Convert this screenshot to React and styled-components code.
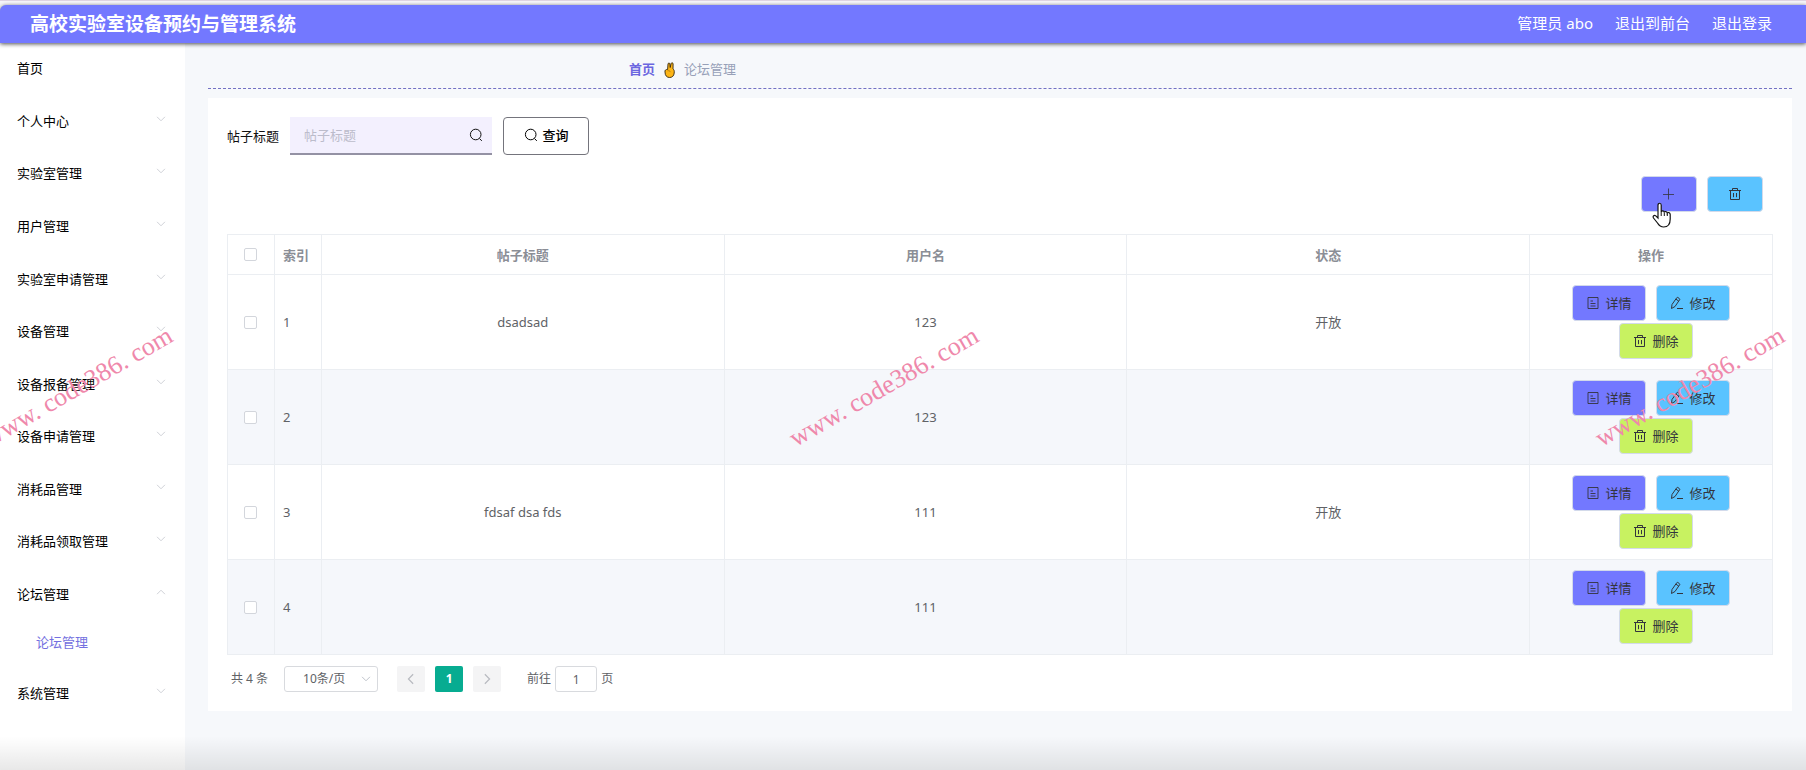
import React, { useState } from 'react';
import styled, { createGlobalStyle, css } from 'styled-components';

const GlobalStyle = createGlobalStyle`
  * {
    box-sizing: border-box;
  }

  body {
    margin: 0;
    background: #f6f8fb;
    color: #111;
    font-family: 'Noto Sans', 'Noto Sans CJK SC', sans-serif;
    font-size: 13px;
    line-height: 20px;
  }

  button,
  input,
  select {
    font-family: inherit;
    font-size: inherit;
    line-height: inherit;
  }
`;

const Page = styled.div`
  position: relative;
  min-height: 100vh;
  display: flex;
  flex-direction: column;
  overflow: hidden;
`;

const TopStrip = styled.div`
  height: 5px;
  background: #f7f5fa;
  border-top: 1px solid #dfd3e2;
`;

const Header = styled.header`
  position: relative;
  height: 38px;
  padding: 0 34px 0 30px;
  display: flex;
  align-items: center;
  justify-content: space-between;
  background: #7378ff;
  border-radius: 6px 0 0 0;
  box-shadow: 0 1px 4px rgba(0, 0, 0, 0.7);
  color: #fff;
`;

const Title = styled.h1`
  margin: 0;
  font-size: 19px;
  line-height: 24px;
`;

const UserNav = styled.nav`
  display: flex;
  gap: 22px;
  padding-bottom: 2px;
  font-size: 15px;
`;

const UserLink = styled.a`
  color: #fff;
  text-decoration: none;
`;

const Body = styled.div`
  flex: 1;
  display: flex;
`;

const Sidebar = styled.nav`
  width: 185px;
  flex: none;
  display: flex;
  flex-direction: column;
  padding-bottom: 50px;
  background: #fff;
`;

const MenuItem = styled.button`
  flex: 1 0 40px;
  display: flex;
  align-items: center;
  justify-content: space-between;
  padding: 0 19px 2px 17px;
  border: 0;
  background: none;
  color: #000;
  cursor: pointer;
`;

const ChevronSlot = styled.span`
  display: flex;
  padding-bottom: 4px;
  color: #d0d2d8;
`;

const SubItem = styled.a`
  flex: none;
  height: 46px;
  padding: 11px 0 0 36px;
  color: #7470e0;
  text-decoration: none;
`;

const Main = styled.main`
  flex: 1;
  min-width: 0;
  padding: 0 14px 48px 23px;
`;

const Breadcrumb = styled.nav`
  height: 46px;
  padding: 16px 0 0 421px;
  display: flex;
  align-items: flex-start;
  gap: 9px;
  border-bottom: 1px dashed #7371c4;

  svg {
    margin-top: 3px;
  }
`;

const CrumbHome = styled.a`
  color: #6b66e0;
  font-weight: bold;
  text-decoration: none;
`;

const CrumbCurrent = styled.span`
  color: #97a0b8;
`;

const Card = styled.section`
  margin-top: 9px;
  padding: 19px;
  background: #fff;
`;

const SearchForm = styled.form`
  display: flex;
  align-items: center;
  gap: 11px;
  height: 38px;
`;

const SearchField = styled.span`
  width: 202px;
  height: 38px;
  padding: 0 9px 0 14px;
  display: flex;
  align-items: center;
  background: #f3f0fe;
  border-bottom: 2px solid #9492a4;
`;

const SearchInput = styled.input`
  flex: 1;
  min-width: 0;
  padding: 0;
  border: 0;
  outline: 0;
  background: none;

  &::placeholder {
    color: #bcbccb;
  }
`;

const QueryButton = styled.button`
  width: 86px;
  height: 38px;
  padding: 0 0 2px;
  display: flex;
  align-items: center;
  justify-content: center;
  gap: 5px;
  border: 1px solid #74747c;
  border-radius: 4px;
  background: #fff;
  color: #000;
  font-weight: 500;
`;

const Toolbar = styled.div`
  display: flex;
  justify-content: flex-end;
  gap: 10px;
  padding: 21px 10px 22px 0;
`;

const tones = {
  detail: '#7378ff',
  edit: '#5ac3ff',
  remove: '#c8f261',
};

const ColorButton = styled.button`
  height: 36px;
  padding: 0 0 1px;
  display: flex;
  align-items: center;
  justify-content: center;
  gap: 5px;
  border: 1px solid #d3daea;
  border-radius: 4px;
  background: ${({ $tone }) => tones[$tone]};
  color: #33343c;
  cursor: pointer;
`;

const ToolButton = styled(ColorButton)`
  width: 56px;
`;

const AddButton = styled(ToolButton)`
  position: relative;
`;

const RowButton = styled(ColorButton)`
  width: 74px;

  & + & {
    margin-left: 10px;
  }
`;

const Pointer = styled.svg`
  position: absolute;
  left: 10px;
  top: 25px;
`;

const Table = styled.table`
  width: 100%;
  table-layout: fixed;
  border-collapse: separate;
  border-spacing: 0;
  border-top: 1px solid #ebeef2;
  border-left: 1px solid #ebeef2;
  color: #606266;
`;

const cell = css`
  padding: 0 8px;
  border-right: 1px solid #ebeef2;
  border-bottom: 1px solid #ebeef2;
  text-align: ${({ $left }) => ($left ? 'left' : 'center')};
`;

const HeadCell = styled.th`
  ${cell}
  height: 40px;
  width: ${({ $width }) => ($width ? `${$width}px` : 'auto')};
  color: #8b8e96;
  font-weight: bold;
`;

const Row = styled.tr`
  height: 95px;
  background: ${({ $striped }) => ($striped ? '#f5f7fb' : '#fff')};
`;

const Cell = styled.td`
  ${cell}
`;

const Checkbox = styled.input`
  appearance: none;
  display: block;
  width: 13px;
  height: 13px;
  margin: 0 0 0 8px;
  border: 1px solid #d3d6dc;
  border-radius: 2px;
  background: #fff;
`;

const Actions = styled.div`
  display: flex;
  flex-wrap: wrap;
  justify-content: center;
  row-gap: 2px;
`;

const Pagination = styled.div`
  display: flex;
  align-items: center;
  padding: 11px 0 0 4px;
  color: #606266;
  font-size: 12px;
`;

const SizeSelect = styled.span`
  position: relative;
  width: 94px;
  height: 26px;
  margin: 0 19px 0 16px;
  display: flex;
  align-items: center;
  color: #c0c4cc;

  svg {
    position: absolute;
    right: 7px;
    pointer-events: none;
  }
`;

const Select = styled.select`
  appearance: none;
  width: 100%;
  height: 26px;
  padding: 0 0 0 18px;
  border: 1px solid #d8dade;
  border-radius: 3px;
  background: #fff;
  color: #606266;
`;

const Pager = styled.div`
  display: flex;
  gap: 10px;
  margin-right: 26px;
`;

const PageButton = styled.button`
  width: 28px;
  height: 26px;
  padding: 0;
  display: flex;
  align-items: center;
  justify-content: center;
  border: 0;
  border-radius: 2px;
  background: ${({ $active }) => ($active ? '#07ac91' : '#f4f4f5')};
  color: ${({ $active }) => ($active ? '#fff' : '#b8bac0')};
  font-weight: bold;
`;

const Jumper = styled.label`
  display: flex;
  align-items: center;
  gap: 4px;
`;

const PageInput = styled.input`
  width: 42px;
  height: 26px;
  padding: 0;
  border: 1px solid #d8dade;
  border-radius: 3px;
  color: #606266;
  text-align: center;
`;

const BottomFade = styled.div`
  position: absolute;
  left: 0;
  right: 0;
  bottom: 0;
  height: 34px;
  background: linear-gradient(rgba(0, 0, 0, 0), rgba(0, 0, 0, 0.09));
  pointer-events: none;
`;

const Watermarks = styled.div`
  position: absolute;
  top: 367px;
  left: -42px;
  right: -4px;
  display: flex;
  justify-content: space-between;
  pointer-events: none;
`;

const Watermark = styled.span`
  width: 240px;
  transform: rotate(-30deg);
  color: #ef88ab;
  font-family: 'Liberation Serif', serif;
  font-size: 26px;
  line-height: 40px;
  text-align: center;
  white-space: nowrap;
`;

const Icon = ({ size = 14, children, ...rest }) => (
  <svg
    width={size}
    height={size}
    viewBox="0 0 14 14"
    fill="none"
    stroke="currentColor"
    strokeWidth="1"
    aria-hidden="true"
    {...rest}
  >
    {children}
  </svg>
);

const SearchIcon = ({ size }) => (
  <Icon size={size}>
    <circle cx="6.7" cy="6.5" r="5.3" />
    <path d="M10.5 10.5l2.3 2.4" />
  </Icon>
);

const PlusIcon = () => (
  <Icon strokeWidth="0.8">
    <path d="M6.5 1.5v11M1 7.500h11" />
  </Icon>
);

const TrashIcon = () => (
  <Icon>
    <path d="M1 3.5h12M4.5 3.3V1.5h5v1.8M2.5 3.5v9h9v-9M5.5 6v4.2M8.5 6v4.2" />
  </Icon>
);

const DocIcon = () => (
  <Icon strokeWidth="0.9">
    <path d="M2 1.500h10v11H2zM4.500 5h2.500M4.500 7.500h5M4.500 10h5" />
  </Icon>
);

const EditIcon = () => (
  <Icon>
    <path d="M2 8.500L6.700 1.800q.6-.7 1.300-.2l1.400 1q.7.500.2 1.200L5 10.500l-3.500 2zM6 3.200l2.700 1.900M7 12.500h6" />
  </Icon>
);

const Chevron = ({ dir = 'down', size = 10 }) => {
  const paths = {
    down: 'M1.500 4l5.500 5.500L12.500 4',
    up: 'M1.500 10L7 4.500l5.500 5.500',
    left: 'M9.500 1.500L4 7l5.500 5.500',
    right: 'M4.500 1.500L10 7l-5.500 5.500',
  };
  return (
    <Icon size={size}>
      <path d={paths[dir]} strokeWidth="1.400" />
    </Icon>
  );
};

const HandIcon = () => (
  <svg width="11" height="16" viewBox="0 0 11 16" aria-hidden="true">
    <path
      d="M1 10C.6 8.300 1.800 7.200 3.600 7.500L4 2C4.200.6 5.800.7 5.900 2L6.200 5.500l.9-4C7.400.4 9.200.6 9.100 2L9 7c1.300.9 1.400 2.200 1.200 4-.3 2.800-1.900 4.500-4.600 4.500S1 13.700 1 10z"
      fill="#fdb515"
      stroke="#33260f"
      strokeWidth="0.900"
    />
    <path d="M3.500 8.800c1.200-.4 2.700.2 3 1.300" fill="none" stroke="#a06a10" strokeWidth=".7" />
  </svg>
);

const menu = [
  '个人中心',
  '实验室管理',
  '用户管理',
  '实验室申请管理',
  '设备管理',
  '设备报备管理',
  '设备申请管理',
  '消耗品管理',
  '消耗品领取管理',
  '论坛管理',
  '系统管理',
];

const posts = [
  { id: 1, title: 'dsadsad', user: '123', status: '开放' },
  { id: 2, title: '', user: '123', status: '' },
  { id: 3, title: 'fdsaf dsa fds', user: '111', status: '开放' },
  { id: 4, title: '', user: '111', status: '' },
];

const App = () => {
  const [open, setOpen] = useState('论坛管理');
  const [keyword, setKeyword] = useState('');
  const [checked, setChecked] = useState([]);
  const [page, setPage] = useState('1');

  const toggleRow = (id) => {
    setChecked((prev) => (prev.includes(id) ? prev.filter((i) => i !== id) : [...prev, id]));
  };

  const toggleAll = (e) => {
    setChecked(e.target.checked ? posts.map((post) => post.id) : []);
  };

  return (
    <Page>
      <GlobalStyle />
      <TopStrip />
      <Header>
        <Title>高校实验室设备预约与管理系统</Title>
        <UserNav>
          <span>管理员 abo</span>
          <UserLink href="#front">退出到前台</UserLink>
          <UserLink href="#logout">退出登录</UserLink>
        </UserNav>
      </Header>
      <Body>
        <Sidebar>
          <MenuItem type="button">首页</MenuItem>
          {menu.map((name) => (
            <React.Fragment key={name}>
              <MenuItem type="button" onClick={() => setOpen(open === name ? '' : name)}>
                {name}
                <ChevronSlot>
                  <Chevron dir={open === name ? 'up' : 'down'} />
                </ChevronSlot>
              </MenuItem>
              {name === '论坛管理' && open === name && <SubItem href="#forum">论坛管理</SubItem>}
            </React.Fragment>
          ))}
        </Sidebar>
        <Main>
          <Breadcrumb>
            <CrumbHome href="#home">首页</CrumbHome>
            <HandIcon />
            <CrumbCurrent>论坛管理</CrumbCurrent>
          </Breadcrumb>
          <Card>
            <SearchForm onSubmit={(e) => e.preventDefault()}>
              <label htmlFor="keyword">帖子标题</label>
              <SearchField>
                <SearchInput
                  id="keyword"
                  placeholder="帖子标题"
                  value={keyword}
                  onChange={(e) => setKeyword(e.target.value)}
                />
                <SearchIcon />
              </SearchField>
              <QueryButton type="submit">
                <SearchIcon />
                查询
              </QueryButton>
            </SearchForm>
            <Toolbar>
              <AddButton type="button" $tone="detail" aria-label="新增">
                <PlusIcon />
                <Pointer width="20" height="26" viewBox="0 0 20 26" aria-hidden="true">
                  <path
                    d="M6 16V3.200C6 .6 9.200.6 9.200 3.200V10c.3-1.500 2.900-1.500 3.100.4.400-1.300 2.800-1.200 3 .7.500-1 2.900-.8 2.900 1.400V17c0 4.500-2.200 8-6.500 8-3.200 0-4.700-1.500-6.200-4L1.500 16c-1.100-2 .8-3.300 2.300-2.100z"
                    fill="#fff"
                    stroke="#111"
                    strokeWidth="1.200"
                  />
                  <path d="M9.200 10v4M12.300 10.500V14M15.300 11.500V14" stroke="#111" />
                </Pointer>
              </AddButton>
              <ToolButton type="button" $tone="edit" aria-label="删除所选">
                <TrashIcon />
              </ToolButton>
            </Toolbar>
            <Table>
              <thead>
                <tr>
                  <HeadCell $width={47}>
                    <Checkbox
                      type="checkbox"
                      aria-label="全选"
                      checked={checked.length === posts.length}
                      onChange={toggleAll}
                    />
                  </HeadCell>
                  <HeadCell $width={47} $left>索引</HeadCell>
                  <HeadCell>帖子标题</HeadCell>
                  <HeadCell>用户名</HeadCell>
                  <HeadCell>状态</HeadCell>
                  <HeadCell $width={243}>操作</HeadCell>
                </tr>
              </thead>
              <tbody>
                {posts.map((post, index) => (
                  <Row key={post.id} $striped={index % 2 === 1}>
                    <Cell>
                      <Checkbox
                        type="checkbox"
                        aria-label={`选择 ${post.id}`}
                        checked={checked.includes(post.id)}
                        onChange={() => toggleRow(post.id)}
                      />
                    </Cell>
                    <Cell $left>{post.id}</Cell>
                    <Cell>{post.title}</Cell>
                    <Cell>{post.user}</Cell>
                    <Cell>{post.status}</Cell>
                    <Cell>
                      <Actions>
                        <RowButton type="button" $tone="detail">
                          <DocIcon />
                          详情
                        </RowButton>
                        <RowButton type="button" $tone="edit">
                          <EditIcon />
                          修改
                        </RowButton>
                        <RowButton type="button" $tone="remove">
                          <TrashIcon />
                          删除
                        </RowButton>
                      </Actions>
                    </Cell>
                  </Row>
                ))}
              </tbody>
            </Table>
            <Pagination>
              <span>共 4 条</span>
              <SizeSelect>
                <Select aria-label="每页条数" defaultValue="10">
                  <option value="10">10条/页</option>
                  <option value="20">20条/页</option>
                </Select>
                <Chevron />
              </SizeSelect>
              <Pager>
                <PageButton type="button" aria-label="上一页" disabled>
                  <Chevron dir="left" size={12} />
                </PageButton>
                <PageButton type="button" $active>1</PageButton>
                <PageButton type="button" aria-label="下一页" disabled>
                  <Chevron dir="right" size={12} />
                </PageButton>
              </Pager>
              <Jumper>
                前往
                <PageInput value={page} onChange={(e) => setPage(e.target.value)} />
                页
              </Jumper>
            </Pagination>
          </Card>
        </Main>
      </Body>
      <BottomFade />
      <Watermarks aria-hidden="true">
        <Watermark>www. code386. com</Watermark>
        <Watermark>www. code386. com</Watermark>
        <Watermark>www. code386. com</Watermark>
      </Watermarks>
    </Page>
  );
};

export default App;
